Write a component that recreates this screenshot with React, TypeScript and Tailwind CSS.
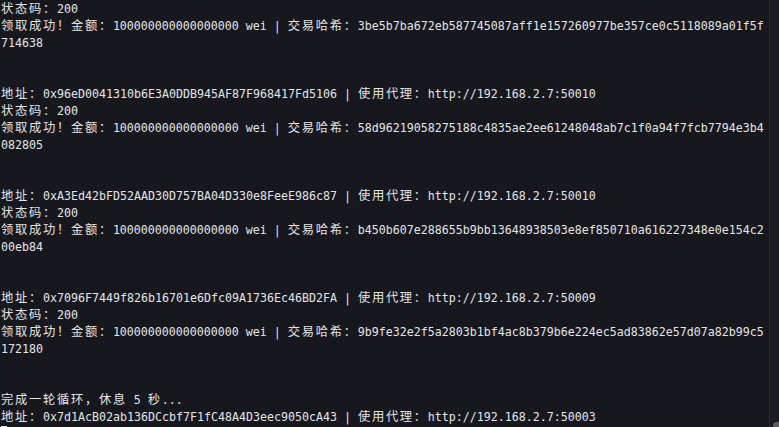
const lines: string[] = [
  "状态码：200",
  "领取成功！金额：100000000000000000 wei | 交易哈希：3be5b7ba672eb587745087aff1e157260977be357ce0c5118089a01f5f",
  "714638",
  "",
  "",
  "地址：0x96eD0041310b6E3A0DDB945AF87F968417Fd5106 | 使用代理：http://192.168.2.7:50010",
  "状态码：200",
  "领取成功！金额：100000000000000000 wei | 交易哈希：58d96219058275188c4835ae2ee61248048ab7c1f0a94f7fcb7794e3b4",
  "082805",
  "",
  "",
  "地址：0xA3Ed42bFD52AAD30D757BA04D330e8FeeE986c87 | 使用代理：http://192.168.2.7:50010",
  "状态码：200",
  "领取成功！金额：100000000000000000 wei | 交易哈希：b450b607e288655b9bb13648938503e8ef850710a616227348e0e154c2",
  "00eb84",
  "",
  "",
  "地址：0x7096F7449f826b16701e6Dfc09A1736Ec46BD2FA | 使用代理：http://192.168.2.7:50009",
  "状态码：200",
  "领取成功！金额：100000000000000000 wei | 交易哈希：9b9fe32e2f5a2803b1bf4ac8b379b6e224ec5ad83862e57d07a82b99c5",
  "172180",
  "",
  "",
  "完成一轮循环，休息 5 秒...",
  "地址：0x7d1AcB02ab136DCcbf7F1fC48A4D3eec9050cA43 | 使用代理：http://192.168.2.7:50003",
];

const wide = /[\u3000-\u9fff\uff00-\uffef]/;

// terminal cells: ascii is one column, CJK takes two
function TermLine({ text }: { text: string }) {
  const parts: React.ReactNode[] = [];
  let buf = "";
  Array.from(text).forEach((ch, i) => {
    if (wide.test(ch)) {
      if (buf) {
        parts.push(buf);
        buf = "";
      }
      parts.push(
        <span key={i} className="inline-block w-[2ch] text-left">
          <span className="text-[12.3px]">{ch}</span>
        </span>,
      );
    } else {
      buf += ch;
    }
  });
  if (buf) parts.push(buf);
  return <div className="h-[17px] whitespace-pre">{parts}</div>;
}

export default function App() {
  return (
    <div className="flex h-[427px] w-[779px] overflow-hidden bg-[#16181e] text-[#e3e4e6]">
      <div className="flex-1 pl-px pt-[1px] font-['DejaVu_Sans_Mono','Noto_Sans_CJK_SC',monospace] text-[11.63px] leading-[17px]">
        {lines.map((l, i) => (
          <TermLine key={i} text={l} />
        ))}
        <div className="h-[17px]">
          <span className="inline-block h-[4px] w-[6px] bg-[#e3e4e6] align-top" />
        </div>
      </div>
      <div className="flex w-[10px] flex-col justify-end border-l border-[#2b2d34] bg-[#1a1c22]">
        <div className="ml-[3px] h-[5px] w-[6px] rounded-tl-sm bg-[#5a5c62]" />
      </div>
    </div>
  );
}
